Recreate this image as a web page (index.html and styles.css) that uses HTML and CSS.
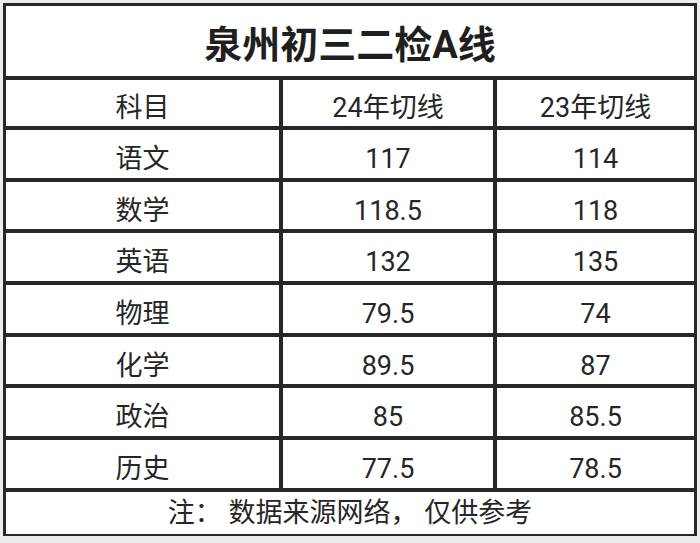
FILE: index.html
```html
<!DOCTYPE html>
<html lang="zh-CN">
<head>
<meta charset="utf-8">
<title>泉州初三二检A线</title>
<link rel="stylesheet" href="styles.css">
</head>
<body>
<div class="sheet">
  <div class="cell title">泉州初三二检A线</div>
  <div class="cell">科目</div>
  <div class="cell">24年切线</div>
  <div class="cell">23年切线</div>
  <div class="cell">语文</div>
  <div class="cell">117</div>
  <div class="cell">114</div>
  <div class="cell">数学</div>
  <div class="cell">118.5</div>
  <div class="cell">118</div>
  <div class="cell">英语</div>
  <div class="cell">132</div>
  <div class="cell">135</div>
  <div class="cell">物理</div>
  <div class="cell">79.5</div>
  <div class="cell">74</div>
  <div class="cell">化学</div>
  <div class="cell">89.5</div>
  <div class="cell">87</div>
  <div class="cell">政治</div>
  <div class="cell">85</div>
  <div class="cell">85.5</div>
  <div class="cell">历史</div>
  <div class="cell">77.5</div>
  <div class="cell">78.5</div>
  <div class="cell note">注： 数据来源网络， 仅供参考</div>
</div>
</body>
</html>
```
FILE: styles.css
```css
html, body {
  margin: 0;
  padding: 0;
}
body {
  background: #ececec;
  width: 700px;
  height: 543px;
  overflow: hidden;
  font-family: Roboto, "Noto Sans CJK SC", sans-serif;
  color: #262626;
}
.sheet {
  margin: 3px 0 0 3px;
  width: 688px;
  border: 3px solid #272727;
  border-bottom-width: 2px;
  background: #272727;
  display: grid;
  grid-template-columns: 273px 210px 197px;
  grid-template-rows: 70px 46px repeat(7, 47.7px) 42px;
  gap: 4px;
}
.cell {
  background: #ffffff;
  display: flex;
  align-items: center;
  justify-content: center;
  font-size: 27px;
  line-height: 1;
  padding-top: 11px;
  box-sizing: border-box;
  white-space: pre;
}
.title {
  grid-column: 1 / 4;
  font-size: 38px;
  font-weight: 700;
  padding-top: 7px;
  color: #1f1f1f;
}
.note {
  grid-column: 1 / 4;
  padding-top: 1px;
}
```
